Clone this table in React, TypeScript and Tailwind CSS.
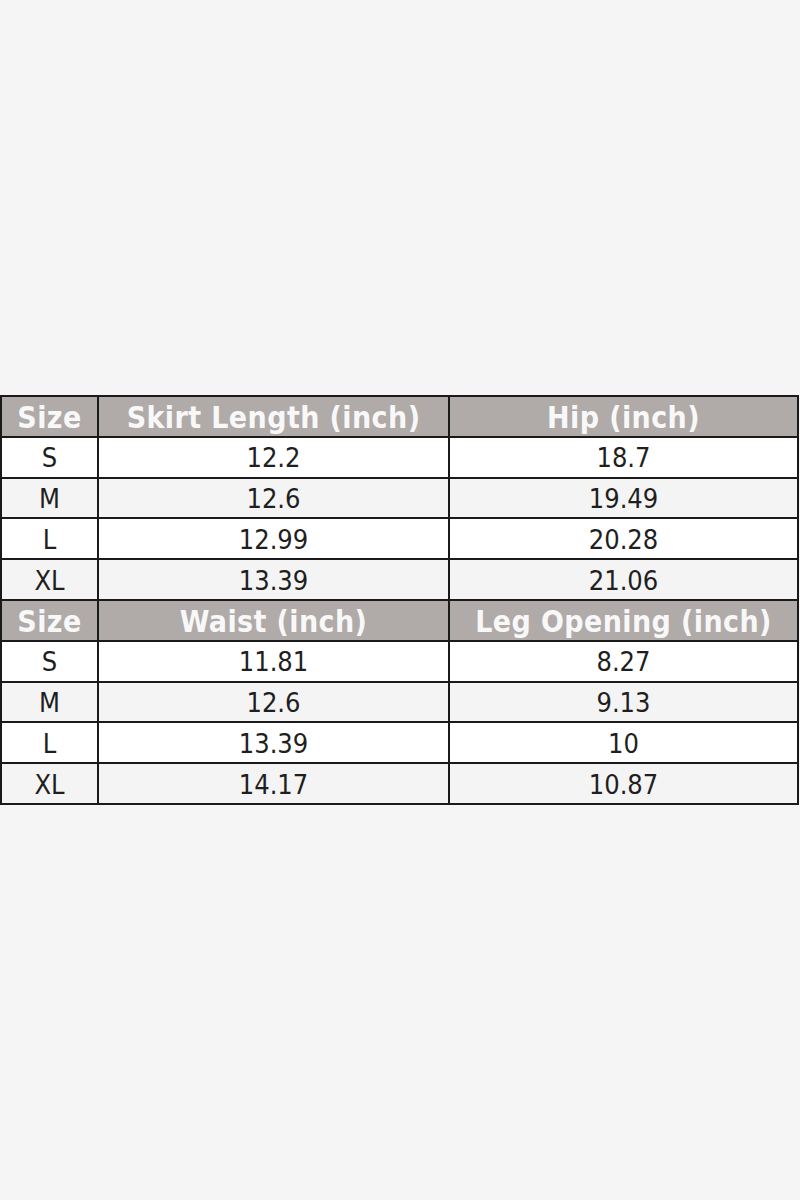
const sections = [
  {
    heads: ["Size", "Skirt Length (inch)", "Hip (inch)"],
    rows: [
      ["S", "12.2", "18.7"],
      ["M", "12.6", "19.49"],
      ["L", "12.99", "20.28"],
      ["XL", "13.39", "21.06"],
    ],
  },
  {
    heads: ["Size", "Waist (inch)", "Leg Opening (inch)"],
    rows: [
      ["S", "11.81", "8.27"],
      ["M", "12.6", "9.13"],
      ["L", "13.39", "10"],
      ["XL", "14.17", "10.87"],
    ],
  },
];

export default function App() {
  return (
    <div className="w-[800px] h-[1200px] bg-[#f5f5f5] flex flex-col pt-[395px]">
      <table
        className="w-[799px] border-collapse table-fixed text-[27px] leading-none text-[#1f1f1f]"
        style={{ fontFamily: '"DejaVu Sans Condensed", "DejaVu Sans", sans-serif' }}
      >
        <colgroup>
          <col className="w-[97px]" />
          <col className="w-[351px]" />
          <col />
        </colgroup>
        <tbody>
          {sections.map((sec, si) => (
            <>
              <tr key={"h" + si} className="h-[40.8px] bg-[#b0aaa9]">
                {sec.heads.map((h) => (
                  <td
                    key={h}
                    className="border-2 border-[#1a1a1a] text-center font-bold text-[30px] text-[#f8f8f8] tracking-[0.4px] p-0 pt-[3px]"
                  >
                    {h}
                  </td>
                ))}
              </tr>
              {sec.rows.map((r, ri) => (
                <tr
                  key={si + "-" + ri}
                  className={`h-[40.8px] ${ri % 2 === 0 ? "bg-white" : "bg-[#f4f4f4]"}`}
                >
                  {r.map((c, ci) => (
                    <td key={ci} className="border-2 border-[#1a1a1a] text-center p-0 pt-[1px]">
                      {c}
                    </td>
                  ))}
                </tr>
              ))}
            </>
          ))}
        </tbody>
      </table>
    </div>
  );
}
